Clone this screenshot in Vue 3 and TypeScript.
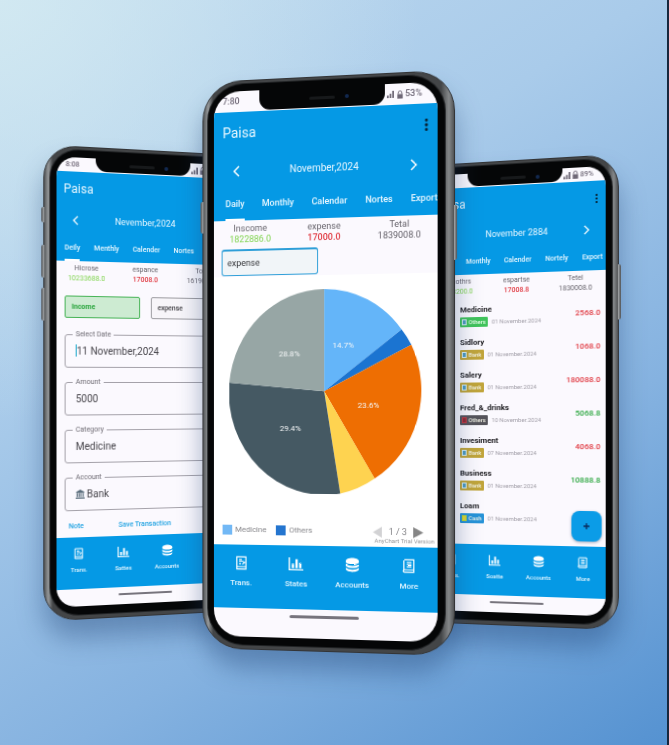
<script setup lang="ts">
type Kind = 'form' | 'chart' | 'list'

interface Phone {
  kind: Kind
  time: string
  battery: string
  month: string
  tabs: string[]
  summary: { label: string; value: string; tone: string }[]
  nav: string[]
}

const phones: Phone[] = [
  {
    kind: 'form',
    time: '8:08',
    battery: '53%',
    month: 'Nevember,2024',
    tabs: ['Deily', 'Menthly', 'Calender', 'Nortes', 'Export'],
    summary: [
      { label: 'Hicrose', value: '10233688.0', tone: 'lime' },
      { label: 'espance', value: '17008.0', tone: 'red' },
      { label: 'Total', value: '1619008.0', tone: 'gray' },
    ],
    nav: ['Trans.', 'Sattes', 'Accounts', 'More'],
  },
  {
    kind: 'chart',
    time: '7:80',
    battery: '53%',
    month: 'November,2024',
    tabs: ['Daily', 'Monthly', 'Calendar', 'Nortes', 'Export'],
    summary: [
      { label: 'Inscome', value: '1822886.0', tone: 'lime' },
      { label: 'expense', value: '17000.0', tone: 'red' },
      { label: 'Tetal', value: '1839008.0', tone: 'gray' },
    ],
    nav: ['Trans.', 'States', 'Accounts', 'More'],
  },
  {
    kind: 'list',
    time: '7:80',
    battery: '89%',
    month: 'November 2884',
    tabs: ['Daily', 'Monthly', 'Calender', 'Nortely', 'Export'],
    summary: [
      { label: 'Incothrs', value: '183200.0', tone: 'lime' },
      { label: 'espartse', value: '17008.8', tone: 'red' },
      { label: 'Tetel', value: '1830008.0', tone: 'gray' },
    ],
    nav: ['Trans.', 'Soatte', 'Accounts', 'More'],
  },
]

const fields = [
  { id: 'date', label: 'Select Date', value: '11 November,2024' },
  { id: 'amount', label: 'Amount', value: '5000' },
  { id: 'category', label: 'Category', value: 'Medicine' },
  { id: 'account', label: 'Account', value: 'Bank' },
]

const entries = [
  { name: 'Medicine', chip: 'Others', tone: 'green', date: '01 November.2024', amount: '2568.0', sign: 'red' },
  { name: 'Sidlory', chip: 'Bank', tone: 'gold', date: '01 November.2024', amount: '1068.0', sign: 'red' },
  { name: 'Salery', chip: 'Bank', tone: 'gold', date: '01 November.2024', amount: '180088.0', sign: 'red' },
  { name: 'Fred_&_drinks', chip: 'Others', tone: 'dark', date: '10 November.2024', amount: '5068.8', sign: 'green' },
  { name: 'Invesiment', chip: 'Bank', tone: 'gold', date: '07 November.2024', amount: '4068.0', sign: 'red' },
  { name: 'Business', chip: 'Bank', tone: 'gold', date: '01 November.2024', amount: '10888.8', sign: 'green' },
  { name: 'Loam', chip: 'Cash', tone: 'blue', date: '01 November.2024', amount: '', sign: 'red' },
]

const slices = [
  { color: '#64b5f9', d: 'M96 101 L96 0 A96 101.5 0 0 1 172.5 41 Z' },
  { color: '#1b74d1', d: 'M96 101 L172.5 41 A96 101.5 0 0 1 182 56 Z' },
  { color: '#ee6e02', d: 'M96 101 L182 56 A96 101.5 0 0 1 146 187 Z' },
  { color: '#fed350', d: 'M96 101 L146 187 A96 101.5 0 0 1 112 202 Z' },
  { color: '#455963', d: 'M96 101 L112 202 A96 101.5 0 0 1 0 92 Z' },
  { color: '#97a6a5', d: 'M96 101 L0 92 A96 101.5 0 0 1 96 0 Z' },
]

const sliceLabels = [
  { x: 115, y: 58, text: '14.7%' },
  { x: 140, y: 118, text: '23.6%' },
  { x: 62, y: 140, text: '29.4%' },
  { x: 61, y: 66, text: '28.8%' },
]
</script>

<template>
  <main class="scene">
    <section v-for="p in phones" :key="p.kind" class="phone" :class="p.kind">
      <i class="key key-a"></i><i class="key key-b"></i><i class="key key-c"></i><i class="key key-r"></i>
      <div class="bezel">
        <div class="screen">
          <div class="status">
            <span class="time">{{ p.time }}</span>
            <div class="notch"><i class="speaker"></i><i class="lens"></i></div>
            <span class="signal">
              <svg class="bars" viewBox="0 0 8 8"><path d="M0 8V5h2v3zM3 8V3h2v5zM6 8V0h2v8z" fill="#6f6877" /></svg>
              <svg class="lock" viewBox="0 0 6 9"><path d="M1 4V2.500a2 2 0 0 1 4 0V4" fill="none" stroke="#6f6877" /><path d="M0 4h6v5H0z" fill="#6f6877" /></svg>
              {{ p.battery }}
            </span>
          </div>

          <header class="head">
            <div class="title-row">
              <h1>Paisa</h1>
              <button class="plain" aria-label="Menu">
                <svg class="dots" viewBox="0 0 4 12"><g fill="#072234"><rect x=".6" width="2.800" height="2.800" rx="1" /><rect x=".6" y="4.600" width="2.800" height="2.800" rx="1" /><rect x=".6" y="9.200" width="2.800" height="2.800" rx="1" /></g></svg>
              </button>
            </div>
            <div class="month-row">
              <button class="plain" aria-label="Previous month">
                <svg class="chev" viewBox="0 0 7 12"><path d="M6 1 1 6l5 5" /></svg>
              </button>
              <span>{{ p.month }}</span>
              <button class="plain" aria-label="Next month">
                <svg class="chev" viewBox="0 0 7 12"><path d="m1 1 5 5-5 5" /></svg>
              </button>
            </div>
            <nav class="tabs">
              <a v-for="(t, i) in p.tabs" :key="t" href="#" :class="{ active: i === 0 }">{{ t }}</a>
            </nav>
          </header>

          <div class="body">
            <dl class="summary">
              <div v-for="s in p.summary" :key="s.label">
                <dt>{{ s.label }}</dt>
                <dd :class="s.tone">{{ s.value }}</dd>
              </div>
            </dl>

            <template v-if="p.kind === 'form'">
              <div class="choices">
                <button class="choice on">Income</button>
                <button class="choice">expense</button>
              </div>
              <form class="fields" @submit.prevent>
                <fieldset v-for="f in fields" :key="f.id">
                  <legend><label :for="f.id">{{ f.label }}</label></legend>
                  <div class="control">
                    <i v-if="f.id === 'date'" class="caret"></i>
                    <svg v-if="f.id === 'account'" class="bank" viewBox="0 0 10 10"><path d="M5 0 9.500 2.500v1h-9v-1zM1 4h1.500v4H1zM3.500 4H5v4H3.500zM6 4h1v4H6zM8 4h1v4H8zM0 8.500h10V10H0z" fill="#5a6d7c" /></svg>
                    <input :id="f.id" type="text" :value="f.value" />
                  </div>
                </fieldset>
              </form>
              <div class="actions">
                <a href="#">Note</a>
                <a href="#">Save Transaction</a>
              </div>
            </template>

            <template v-else-if="p.kind === 'chart'">
              <div class="filter"><button>expense</button></div>
              <div class="chart-panel">
                <svg class="pie" viewBox="0 0 192 203" role="img" aria-label="Expenses by category">
                  <path v-for="s in slices" :key="s.color" :d="s.d" :fill="s.color" />
                  <text v-for="l in sliceLabels" :key="l.text" :x="l.x" :y="l.y">{{ l.text }}</text>
                </svg>
                <div class="legend">
                  <span><i class="swatch light"></i>Medicine</span>
                  <span><i class="swatch deep"></i>Others</span>
                  <div class="pager">
                    <button class="plain" aria-label="Previous page"><svg viewBox="0 0 10 11"><path d="M9 0v11L0 5.500z" fill="#d2d2d4" /></svg></button>
                    <b>1 / 3</b>
                    <button class="plain" aria-label="Next page"><svg viewBox="0 0 10 11"><path d="M0 0v11l10-5.500z" fill="#858585" /></svg></button>
                  </div>
                </div>
                <small class="credit">AnyChart Trial Version</small>
              </div>
            </template>

            <template v-else>
              <ul class="entries">
                <li v-for="e in entries" :key="e.name">
                  <div>
                    <strong>{{ e.name }}</strong>
                    <p><span class="chip" :class="e.tone"><i></i>{{ e.chip }}</span><time>{{ e.date }}</time></p>
                  </div>
                  <b :class="e.sign">{{ e.amount }}</b>
                </li>
              </ul>
              <button class="fab" aria-label="Add transaction">
                <svg viewBox="0 0 8 8"><path d="M4 1v6M1 4h6" stroke="#0b2a5c" stroke-width="1.300" /></svg>
              </button>
            </template>
          </div>

          <nav class="dock">
            <a v-for="(n, i) in p.nav" :key="n" href="#">
              <svg v-if="i === 0" viewBox="0 0 16 16" fill="none" stroke="#fff" stroke-width="1.300"><path d="M3 1.500h10v13H3zM3 12h10M5.500 4.500h3M5.500 6.500h5M5.500 9h2M9 9.500l3-2.500" /></svg>
              <svg v-else-if="i === 1" viewBox="0 0 16 16" fill="#fff"><path d="M0 1h1.500v12.500H16V15H0zM3.500 8h2.500v4.500H3.500zM7.500 3H10v9.500H7.500zM11.500 7H14v5.500h-2.500z" /></svg>
              <svg v-else-if="i === 2" viewBox="0 0 16 16" fill="#fff"><path d="M1 4c0-4.500 14-4.500 14 0v1.200c-2 3-12 3-14 0zM1 7c3 2.700 11 2.700 14 0v2.200c-3 2.700-11 2.700-14 0zM1 11c3 2.700 11 2.700 14 0v1c0 4.500-14 4.500-14 0z" /></svg>
              <svg v-else viewBox="0 0 16 16" fill="none" stroke="#fff" stroke-width="1.300"><path d="M3.500 1.500h10v13h-10c-1.500 0-1.500-2.500 0-2.500h10M3 13V2M6 4.500h5M6 6.800h5M6 9h5" /></svg>
              {{ n }}
            </a>
          </nav>
          <div class="home"><i></i></div>
        </div>
      </div>
    </section>
  </main>
</template>

<style>
body {
  margin: 0;
}
</style>

<style scoped>
* {
  box-sizing: border-box;
}

.scene {
  display: flex;
  align-items: flex-start;
  min-height: 100vh;
  padding: 76px 7.7% 80px 6.5%;
  overflow: hidden;
  border-right: 2px solid #17273d;
  background:
    radial-gradient(circle at 0 0, rgba(214, 236, 242, 0.8), transparent 42%),
    linear-gradient(148deg, #bfdaef 0%, #a9cbea 35%, #85b2e0 68%, #5592d1 100%);
  font-family: Roboto, 'Liberation Sans', sans-serif;
}

.phone {
  --text: 7px;
  --status: 14px;
  --icon: 12px;
  position: relative;
  flex: 0 0 35.8%;
  margin-top: 74px;
  padding: 3px 6px 4px;
  border: 1px solid #333436;
  border-radius: 32px;
  background: linear-gradient(90deg, #55585a 0, #96999b 2%, #434547 4%, #434547 95%, #85888a 98%, #515355 100%);
  box-shadow: 0 18px 26px rgba(28, 62, 112, 0.4);
  transform: perspective(1000px) rotateY(13deg);
}

.phone.chart {
  --text: 9px;
  --status: 21px;
  --icon: 15px;
  z-index: 2;
  flex-basis: 44%;
  margin: 0 -7% 0 -8.6%;
  padding: 3px 9px 4px 5px;
  border-radius: 40px;
  transform-origin: 50% 62%;
  transform: perspective(1000px) rotateY(-8deg);
}

.phone.list {
  margin-top: 84px;
  transform-origin: 50% 60%;
  transform: perspective(1000px) rotateY(-12deg);
}

.key {
  position: absolute;
  left: -3px;
  width: 3px;
  height: 32px;
  border-radius: 2px 0 0 2px;
  background: linear-gradient(90deg, #4c4f52, #a9acae);
}

.key-a { top: 13%; height: 15px; }
.key-b { top: 21%; }
.key-c { top: 30%; }
.key-r { right: -3px; left: auto; top: 23%; height: 54px; transform: scaleX(-1); }
.chart .key-a, .chart .key-c { display: none; }
.form .key-r { display: none; }
.list .key:not(.key-r) { display: none; }

.bezel {
  padding: 7px 6px 8px;
  border-radius: 28px;
  background: #050607;
  box-shadow: 0 0 0 1px #222426;
}

.chart .bezel {
  padding: 7px 7px 8px 6px;
  border-radius: 36px;
}

.screen {
  overflow: hidden;
  border-radius: 19px;
  background: #fbf9fe;
}

.chart .screen {
  border-radius: 27px;
}

.status {
  display: grid;
  grid-template-columns: 22% 54% 24%;
  height: var(--status);
  color: #6f6877;
  font-size: var(--text);
  font-weight: 500;
  line-height: var(--status);
}

.chart .status {
  grid-template-columns: 21% 56% 23%;
}

.time {
  padding-left: 9px;
}

.notch {
  display: flex;
  align-items: center;
  justify-content: center;
  gap: 10px;
  height: calc(var(--status) - 1px);
  padding-left: 12%;
  border-radius: 0 0 11px 11px;
  background: #050607;
}

.speaker {
  width: 26px;
  height: 3px;
  border-radius: 2px;
  background: #17191b;
}

.lens {
  width: 4px;
  height: 4px;
  border-radius: 50%;
  background: #12294f;
}

.signal {
  display: flex;
  align-items: center;
  gap: 2px;
  padding-left: 1px;
  white-space: nowrap;
}

.bars {
  width: var(--text);
  height: 7px;
}

.lock {
  width: 6px;
  height: 8px;
}

.head {
  background: #0599e5;
  color: #e9f7ff;
}

.plain {
  display: flex;
  padding: 0;
  border: 0;
  background: none;
}

.title-row,
.month-row {
  display: flex;
  align-items: center;
  justify-content: space-between;
}

.title-row {
  height: 34px;
  padding: 0 7px;
}

h1 {
  margin: 0;
  font-size: 12px;
  font-weight: 400;
}

.dots {
  width: 4px;
  height: 9px;
}

.month-row {
  height: 28px;
  padding: 0 16px;
  font-size: 9px;
}

.chev {
  width: 6px;
  height: 10px;
  fill: none;
  stroke: #fff;
  stroke-width: 1.500;
}

.tabs {
  display: flex;
  gap: 14px;
  height: 26px;
  padding-left: 8px;
  overflow: hidden;
  font-size: var(--text);
  font-weight: 500;
  line-height: 26px;
}

.tabs a {
  flex: none;
  color: inherit;
  text-decoration: none;
}

.tabs .active {
  border-bottom: 2px solid #fff;
}

.chart .title-row { height: 42px; padding: 0 9px; }
.chart h1 { font-size: 14px; }
.chart .dots { height: 12px; }
.chart .month-row { height: 35px; padding: 0 20px; font-size: 10px; }
.chart .chev { width: 7px; height: 12px; }
.chart .tabs { gap: 18px; height: 33px; padding-left: 12px; line-height: 33px; }

.body {
  position: relative;
  min-height: 272px;
}

.chart .body {
  display: flex;
  flex-direction: column;
  min-height: 328px;
}

.summary {
  display: grid;
  grid-template-columns: repeat(3, 1fr);
  margin: 0;
  padding-top: 2px;
  color: #66636b;
  font-size: var(--text);
  line-height: 10px;
  text-align: center;
}

.chart .summary {
  padding-top: 3px;
  line-height: 11px;
}

dd { margin: 0; }
.lime { color: #82d552; }
.red { color: #e03a42; }
.green { color: #2ba63f; }
dd.red { font-weight: 500; }

.choices {
  display: grid;
  grid-template-columns: 1fr 1fr;
  gap: 11px;
  padding: 12px 8px 0;
}

.choice {
  height: 22px;
  padding: 0 6px;
  border: 1px solid #9c9ba0;
  border-radius: 2px;
  background: #f7f5f9;
  color: #3c3b40;
  font: 500 7px Roboto, sans-serif;
  text-align: left;
}

.choice.on {
  border-color: #47b356;
  background: #cdebd2;
  color: #2aa53d;
  font-weight: 700;
}

.fields {
  display: grid;
  gap: 10px;
  padding: 12px 8px 0;
}

fieldset {
  min-width: 0;
  height: 37px;
  margin: 0;
  padding: 0 10px;
  border: 1px solid #a5a2aa;
  border-radius: 3px;
}

legend {
  margin-left: -3px;
  padding: 0 3px;
  color: #6d6a72;
  font-size: 7px;
  line-height: 8px;
}

legend label {
  display: block;
}

.control {
  display: flex;
  align-items: center;
  height: 24px;
}

.control input {
  flex: 1;
  min-width: 0;
  padding: 0;
  border: 0;
  outline: 0;
  background: none;
  color: #47454b;
  font: 400 10px Roboto, sans-serif;
}

.caret {
  width: 1px;
  height: 12px;
  background: #16a5ca;
}

.bank {
  width: 9px;
  height: 9px;
  margin-right: 2px;
}

.actions {
  display: flex;
  gap: 35px;
  padding: 9px 12px 5px;
  font-size: 7px;
  font-weight: 500;
  line-height: 12px;
}

.actions a {
  color: #22a3e2;
  text-decoration: none;
}

.filter {
  padding: 4px 8px 1px;
}

.filter button {
  display: block;
  width: 47%;
  height: 27px;
  padding: 0 5px;
  border: 1px solid #2f9fd8;
  border-top-width: 2px;
  border-radius: 3px;
  background: #f1f5f8;
  color: #35363a;
  font: 400 9px Roboto, sans-serif;
  text-align: left;
}

.chart-panel {
  flex: 1;
  padding-top: 14px;
  background: #fff;
}

.pie {
  display: block;
  width: 86%;
  margin: 0 auto;
}

.pie text {
  fill: #f4f6f7;
  font-size: 8px;
  text-anchor: middle;
}

.legend {
  display: flex;
  align-items: center;
  gap: 10px;
  padding: 31px 14px 0 9px;
  color: #86868a;
  font-size: 8px;
  line-height: 12px;
}

.legend span {
  display: flex;
  align-items: center;
  gap: 3px;
}

.swatch {
  width: 10px;
  height: 10px;
}

.light { background: #72b8f5; }
.deep { background: #2475cf; }

.pager {
  display: flex;
  align-items: center;
  gap: 6px;
  margin-left: auto;
  font-size: 9px;
}

.pager b { font-weight: 400; }
.pager svg { width: 10px; height: 11px; }

.credit {
  display: block;
  padding-right: 3px;
  color: #97979a;
  font-size: 6px;
  line-height: 6px;
  text-align: right;
}

.entries {
  display: grid;
  gap: 10px;
  margin: 0;
  padding: 8px 5px 0 31px;
  list-style: none;
}

.entries li {
  display: flex;
  align-items: center;
  justify-content: space-between;
  height: 23px;
  font-size: 8px;
  line-height: 11px;
}

.entries b { font-weight: 500; }

.entries strong {
  display: block;
  color: #19181c;
  font-weight: 700;
}

.entries p {
  display: flex;
  align-items: center;
  gap: 4px;
  margin: 2px 0 0;
  color: #a09da6;
  font-size: 6px;
  line-height: 10px;
}

.chip {
  display: flex;
  align-items: center;
  gap: 2px;
  height: 10px;
  padding: 0 2px;
  border-radius: 1px;
  color: #f6f6e8;
  font-weight: 500;
}

.chip i {
  width: 5px;
  height: 6px;
  border: 1px solid #d5edf2;
  background: #4d9bc0;
}

.chip.green { background: #40c35b; color: #e6ffe9; }
.chip.gold { background: #c1a53a; }
.chip.dark { background: #55535a; }
.chip.dark i { border-color: #c53840; background: #8e2a33; }
.chip.blue { background: #2693d8; }
.chip.blue i { border-color: #b9d634; background: #e4d534; }

.fab {
  position: absolute;
  right: 4px;
  bottom: 5px;
  display: grid;
  place-items: center;
  width: 30px;
  height: 30px;
  padding: 0;
  border: 0;
  border-radius: 8px;
  background: #0b9ce7;
  box-shadow: 0 1px 3px rgba(30, 50, 90, 0.4);
}

.fab svg {
  width: 8px;
  height: 8px;
}

.dock {
  display: grid;
  grid-template-columns: repeat(4, 1fr);
  height: 51px;
  padding-top: 10px;
  background: #0599e5;
}

.dock a {
  display: flex;
  flex-direction: column;
  align-items: center;
  gap: 6px;
  color: #e3f5ff;
  font-size: 6px;
  font-weight: 500;
  line-height: 8px;
  text-decoration: none;
}

.dock svg {
  width: var(--icon);
  height: var(--icon);
}

.chart .dock { height: 64px; padding-top: 11px; }
.chart .dock a { gap: 9px; font-size: 8px; }

.home {
  display: flex;
  justify-content: center;
  height: 17px;
  padding-top: 6px;
}

.home i {
  width: 31%;
  height: 2px;
  border-radius: 2px;
  background: #77747d;
}

.chart .home {
  height: 29px;
  padding-top: 6px;
}

.chart .home i {
  height: 3px;
}
</style>
